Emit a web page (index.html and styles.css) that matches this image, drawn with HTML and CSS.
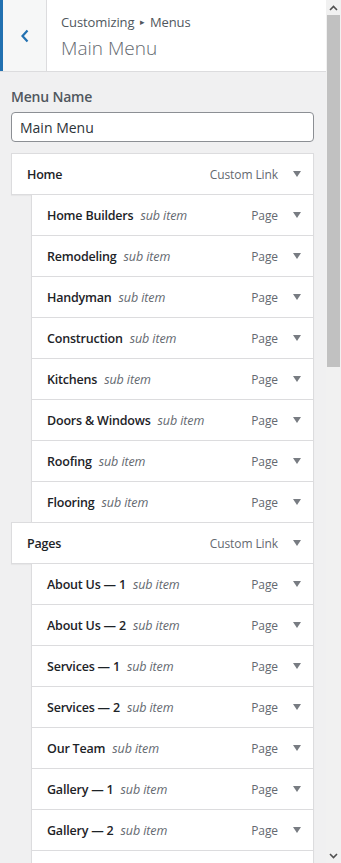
FILE: index.html
```html
<!DOCTYPE html>
<html>
<head>
    <title>Customizing - Main Menu</title>
    <link rel="stylesheet" href="styles.css">
</head>
<body>
    <div class="screen">
        <div class="panel">
            <div class="panel-header">
                <div class="back-btn">
                    <svg width="10" height="14" viewBox="0 0 10 14"><path d="M7.5 1.5 L2.5 7 L7.5 12.5" fill="none" stroke="#2271b1" stroke-width="2.2"/></svg>
                </div>
                <div class="header-titles">
                    <div class="crumbs">Customizing <span class="crumb-sep">&#9656;</span> Menus</div>
                    <div class="panel-title">Main Menu</div>
                </div>
            </div>

            <div class="panel-body">
                <label class="field-label">Menu Name</label>
                <input class="menu-name" type="text" value="Main Menu">

                <ul class="menu-items">
                    <li class="menu-item"><span class="item-title">Home</span><span class="item-type">Custom Link</span><span class="item-toggle"></span></li>
                    <li class="menu-item sub"><span class="item-title">Home Builders</span><span class="sub-note">sub item</span><span class="item-type">Page</span><span class="item-toggle"></span></li>
                    <li class="menu-item sub"><span class="item-title">Remodeling</span><span class="sub-note">sub item</span><span class="item-type">Page</span><span class="item-toggle"></span></li>
                    <li class="menu-item sub"><span class="item-title">Handyman</span><span class="sub-note">sub item</span><span class="item-type">Page</span><span class="item-toggle"></span></li>
                    <li class="menu-item sub"><span class="item-title">Construction</span><span class="sub-note">sub item</span><span class="item-type">Page</span><span class="item-toggle"></span></li>
                    <li class="menu-item sub"><span class="item-title">Kitchens</span><span class="sub-note">sub item</span><span class="item-type">Page</span><span class="item-toggle"></span></li>
                    <li class="menu-item sub"><span class="item-title">Doors &amp; Windows</span><span class="sub-note">sub item</span><span class="item-type">Page</span><span class="item-toggle"></span></li>
                    <li class="menu-item sub"><span class="item-title">Roofing</span><span class="sub-note">sub item</span><span class="item-type">Page</span><span class="item-toggle"></span></li>
                    <li class="menu-item sub"><span class="item-title">Flooring</span><span class="sub-note">sub item</span><span class="item-type">Page</span><span class="item-toggle"></span></li>
                    <li class="menu-item"><span class="item-title">Pages</span><span class="item-type">Custom Link</span><span class="item-toggle"></span></li>
                    <li class="menu-item sub"><span class="item-title">About Us — 1</span><span class="sub-note">sub item</span><span class="item-type">Page</span><span class="item-toggle"></span></li>
                    <li class="menu-item sub"><span class="item-title">About Us — 2</span><span class="sub-note">sub item</span><span class="item-type">Page</span><span class="item-toggle"></span></li>
                    <li class="menu-item sub"><span class="item-title">Services — 1</span><span class="sub-note">sub item</span><span class="item-type">Page</span><span class="item-toggle"></span></li>
                    <li class="menu-item sub"><span class="item-title">Services — 2</span><span class="sub-note">sub item</span><span class="item-type">Page</span><span class="item-toggle"></span></li>
                    <li class="menu-item sub"><span class="item-title">Our Team</span><span class="sub-note">sub item</span><span class="item-type">Page</span><span class="item-toggle"></span></li>
                    <li class="menu-item sub"><span class="item-title">Gallery — 1</span><span class="sub-note">sub item</span><span class="item-type">Page</span><span class="item-toggle"></span></li>
                    <li class="menu-item sub"><span class="item-title">Gallery — 2</span><span class="sub-note">sub item</span><span class="item-type">Page</span><span class="item-toggle"></span></li>
                    <li class="menu-item sub"></li>
                </ul>
            </div>
        </div>

        <!-- fake scrollbar -->
        <div class="scrollbar">
            <div class="scroll-btn">
                <svg width="9" height="6" viewBox="0 0 9 6"><path d="M1 5 L4.5 1.5 L8 5" fill="none" stroke="#505050" stroke-width="1.6"/></svg>
            </div>
            <div class="scroll-track">
                <div class="scroll-thumb"></div>
            </div>
            <div class="scroll-btn">
                <svg width="9" height="6" viewBox="0 0 9 6"><path d="M1 1 L4.5 4.5 L8 1" fill="none" stroke="#505050" stroke-width="1.6"/></svg>
            </div>
        </div>
    </div>
</body>
</html>
```

FILE: styles.css
```css
body {
	margin: 0;
	padding: 0;
	font-family: "Open Sans", "Noto Sans", Arial, sans-serif;
	background-color: #f0f0f1;
	color: #1d2327;
	overflow: hidden;
}

.screen {
	display: flex;
	height: 863px;
	overflow: hidden;
}

.panel {
	flex: 1;
	min-width: 0;
	overflow: hidden;
}

/* header */
.panel-header {
	display: flex;
	height: 71px;
	background-color: #fff;
	border-bottom: 1px solid #dcdcde;
}

.back-btn {
	width: 43px;
	display: flex;
	align-items: center;
	justify-content: center;
	background-color: #f6f7f7;
	border-left: 3px solid #2271b1;
	border-right: 1px solid #dcdcde;
	padding-top: 1px;
}

.header-titles {
	padding: 13px 0 0 14px;
}

.crumbs {
	font-size: 13px;
	color: #50575e;
	line-height: 18px;
	letter-spacing: -0.1px;
}

.crumb-sep {
	font-size: 9px;
	vertical-align: 2px;
	margin: 0 2px;
}

.panel-title {
	font-size: 19px;
	font-weight: 300;
	color: #646970;
	line-height: 28px;
	margin-top: 3px;
}

/* body */
.panel-body {
	padding: 15px 12px 0 11px;
}

.field-label {
	display: block;
	font-size: 14px;
	font-weight: 600;
	color: #50575e;
	line-height: 20px;
	margin-bottom: 5px;
	letter-spacing: -0.2px;
}

.menu-name {
	display: block;
	box-sizing: border-box;
	width: 100%;
	height: 30px;
	padding: 0 8px;
	font-family: inherit;
	font-size: 14px;
	color: #2c3338;
	border: 1px solid #8c8f94;
	border-radius: 4px;
	background-color: #fff;
}

.menu-items {
	list-style: none;
	margin: 11px 0 0 0;
	padding: 0;
}

.menu-item {
	display: flex;
	align-items: center;
	height: 40px;
	margin-top: -1px;
	padding-left: 15px;
	background-color: #fff;
	border: 1px solid #dcdcde;
	box-shadow: 0 1px 1px rgba(0, 0, 0, 0.04);
	font-size: 12.5px;
}

.menu-item:first-child {
	margin-top: 0;
}

.menu-item.sub {
	margin-left: 20px;
}

.item-title {
	font-weight: 600;
	color: #1d2327;
	white-space: nowrap;
	letter-spacing: -0.2px;
}

.sub-note {
	font-style: italic;
	color: #646970;
	margin-left: 7px;
	white-space: nowrap;
	letter-spacing: -0.1px;
}

.item-type {
	margin-left: auto;
	font-size: 12px;
	color: #646970;
	letter-spacing: -0.1px;
}

.item-toggle {
	width: 35px;
	display: flex;
	justify-content: center;
}

.item-toggle::after {
	content: "";
	border-left: 4px solid transparent;
	border-right: 4px solid transparent;
	border-top: 6px solid #787c82;
	margin-left: 2px;
}

/* scrollbar */
.scrollbar {
	width: 15px;
	display: flex;
	flex-direction: column;
	background-color: #f1f1f1;
}

.scroll-btn {
	height: 15px;
	display: flex;
	align-items: center;
	justify-content: center;
}

.scroll-track {
	flex: 1;
}

.scroll-thumb {
	height: 352px;
	margin: 0 1px;
	background-color: #c1c1c1;
}
```
